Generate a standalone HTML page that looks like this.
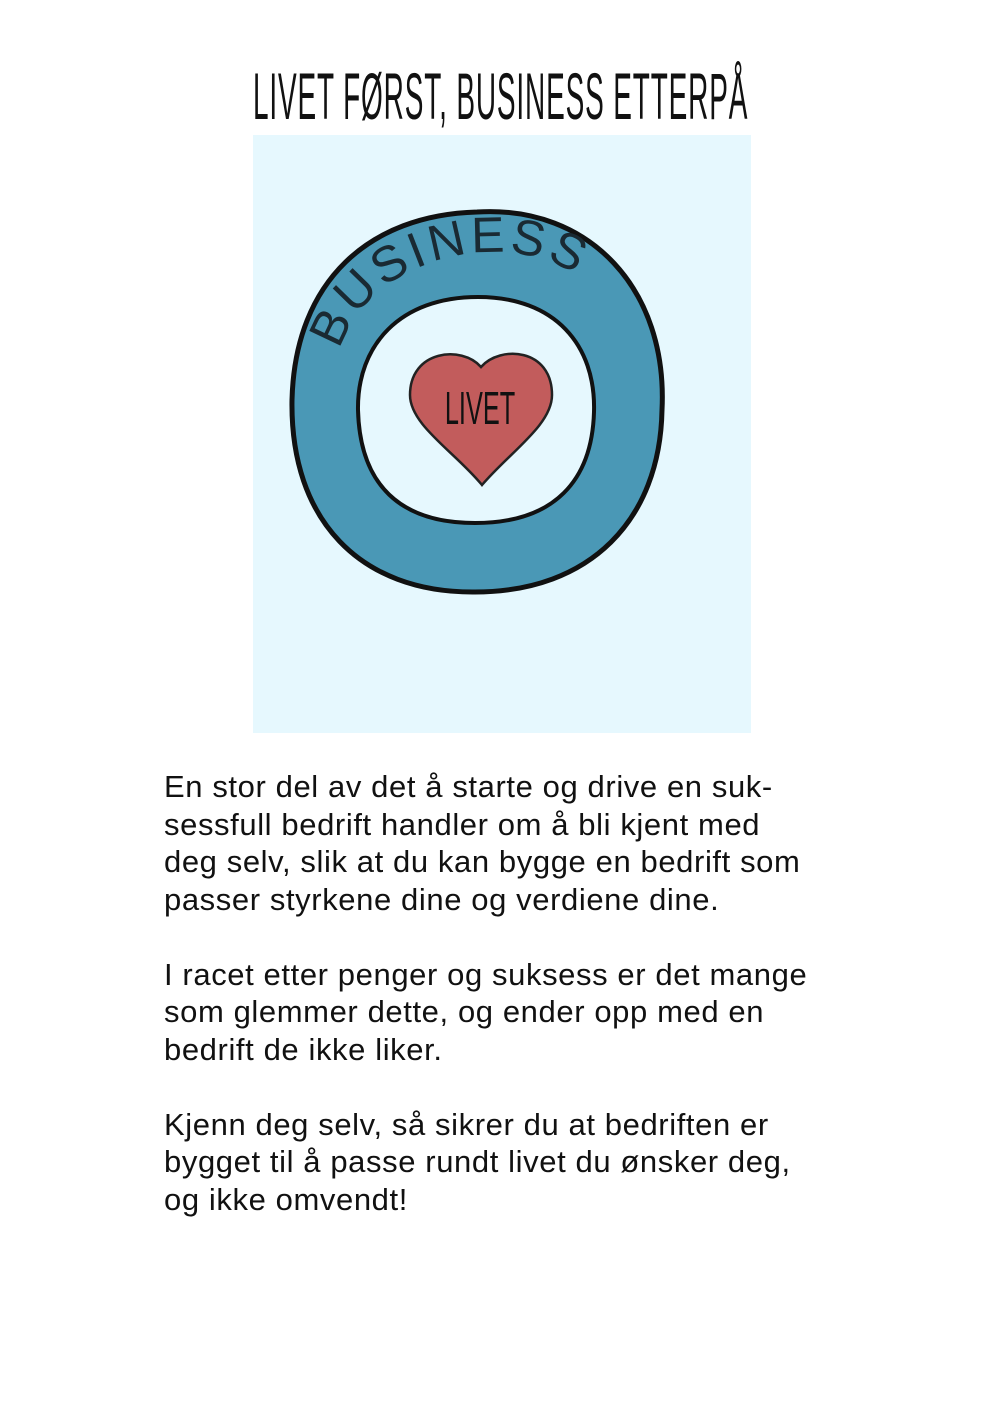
<!DOCTYPE html>
<html><head><meta charset="utf-8"><style>
html,body{margin:0;padding:0;background:#fff;width:1000px;height:1410px;overflow:hidden}
.title{position:absolute;left:253px;top:56px;width:1200px;font-family:"Liberation Sans Narrow","Liberation Sans",sans-serif;font-size:66px;line-height:80px;color:#111;white-space:nowrap;transform:scaleX(0.424);transform-origin:0 0;letter-spacing:2px}
.img{position:absolute;left:253px;top:135px;width:498px;height:598px;background:#e6f8fe}
.txt{position:absolute;left:164px;top:768px;font-family:"Liberation Sans",sans-serif;font-size:31px;letter-spacing:0.6px;line-height:37.5px;color:#111;white-space:nowrap}
</style></head><body>
<div class="title">LIVET FØRST, BUSINESS ETTERPÅ</div>
<div class="img">
<svg width="498" height="598" viewBox="253 135 498 598">
<path d="M477 212 C590 205 668 290 662 410 C660 520 590 592 475 592 C360 593 290 520 292 400 C295 280 370 215 477 212 Z" fill="#4a98b6" stroke="#111" stroke-width="5"/>
<path d="M478 297 C555 297 596 345 594 412 C592 480 555 523 475 523 C400 523 360 485 358 410 C357 345 400 297 478 297 Z" fill="#e6f8fe" stroke="#111" stroke-width="4"/>
<path d="M481 367 C500 345 552 348 552 395 C552 425 510 452 482 485 C455 452 410 425 410 395 C410 350 462 345 481 367 Z" fill="#c25c5c" stroke="#222" stroke-width="2.5"/>
<text x="480" y="424" text-anchor="middle" font-family="Liberation Sans Narrow, Liberation Sans, sans-serif" font-size="46" fill="#111" transform="translate(480 0) scale(0.55 1) translate(-480 0)">LIVET</text>
<defs><path id="arc" d="M340 350 C360 280 440 250 500 252 C540 254 570 265 600 295"/></defs>
<text font-family="Liberation Sans, sans-serif" font-size="50" fill="#1a2a33" letter-spacing="4"><textPath href="#arc">BUSINESS</textPath></text>
</svg>
</div>
<div class="txt">En stor del av det å starte og drive en suk-<br>sessfull bedrift handler om å bli kjent med<br>deg selv, slik at du kan bygge en bedrift som<br>passer styrkene dine og verdiene dine.<br><br>I racet etter penger og suksess er det mange<br>som glemmer dette, og ender opp med en<br>bedrift de ikke liker.<br><br>Kjenn deg selv, så sikrer du at bedriften er<br>bygget til å passe rundt livet du ønsker deg,<br>og ikke omvendt!</div>
</body></html>
